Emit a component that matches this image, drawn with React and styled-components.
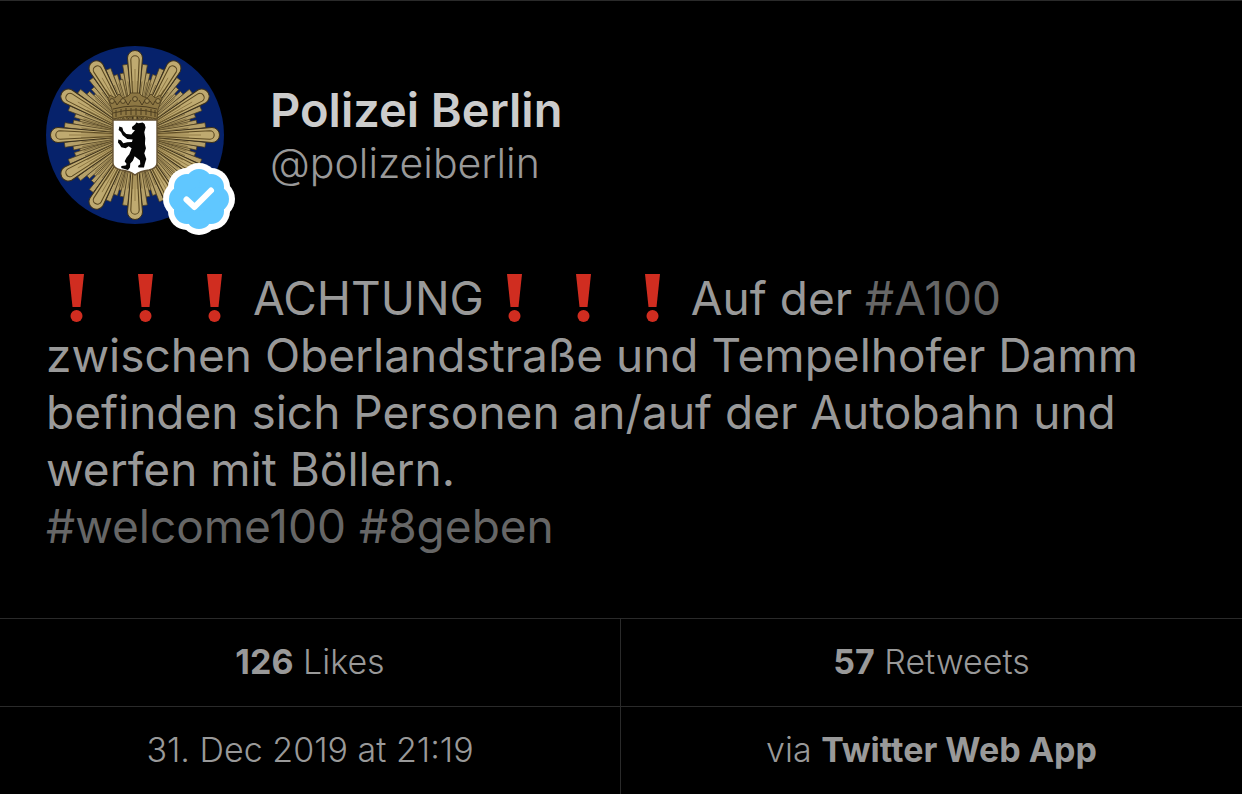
import React from "react";
import styled, { createGlobalStyle } from "styled-components";

const GlobalStyle = createGlobalStyle`
  * { box-sizing: border-box; }
  body {
    margin: 0;
    background: #000;
    color: #999;
    font-family: Inter, "Liberation Sans", sans-serif;
  }
`;

const Tweet = styled.article`
  border-top: 1px solid #2a2a2a;
`;

const Content = styled.div`
  padding: 45px 46px 63px;
`;

const Header = styled.header`
  display: flex;
  align-items: center;
  gap: 46px;
`;

const Avatar = styled.div`
  position: relative;
  flex: none;
  width: 178px;
  height: 178px;
`;

const Crest = styled.svg`
  display: block;
  width: 100%;
  height: 100%;
`;

const Badge = styled.svg`
  position: absolute;
  right: -11px;
  bottom: -11px;
  width: 72px;
  height: 72px;
`;

const Names = styled.div`
  display: flex;
  flex-direction: column;
  min-width: 0;
`;

const Name = styled.h1`
  margin: 0;
  font-size: 47px;
  line-height: 56px;
  font-weight: 600;
  color: #ccc;
`;

const Handle = styled.a`
  font-size: 41px;
  line-height: 50px;
  font-weight: 300;
  color: #999;
  text-decoration: none;
`;

const Message = styled.p`
  margin: 46px 0 0;
  font-size: 46px;
  line-height: 57px;
  font-weight: 400;
`;

const Hashtag = styled.a`
  color: #666;
  text-decoration: none;
`;

const Alert = styled.svg`
  width: 69px;
  height: 48px;
  vertical-align: -7px;
`;

const Facts = styled.footer`
  display: grid;
  grid-template-columns: 1fr 1fr;
`;

const Fact = styled.div`
  height: 88px;
  border-top: 1px solid #2a2a2a;
  border-right: ${(p) => (p.$divided ? "1px solid #2a2a2a" : "0")};
  text-align: center;
  font-size: 34px;
  line-height: 86px;
  font-weight: 300;

  strong {
    font-weight: 700;
  }
`;

const range = (n) => Array.from({ length: n }, (_, i) => i);

function Ray({ angle, length, width }) {
  const h = width / 2;
  return (
    <path
      transform={`rotate(${angle})`}
      d={`M-1 0L${-h} ${-length}H${h}L1 0Z`}
      fill="#b5a069"
      stroke="#4b3c1d"
      strokeWidth="0.7"
    />
  );
}

function PoliceStar() {
  return (
    <Crest viewBox="-89 -89 178 178" role="img" aria-label="Polizei Berlin">
      <circle r="89" fill="#06226b" />
      {range(12).map((i) => (
        <g key={i} transform={`rotate(${i * 30})`}>
          <Ray angle={15} length={57} width={5} />
          <Ray angle={-12} length={63} width={4} />
          <Ray angle={12} length={63} width={4} />
          <Ray angle={-8} length={71} width={5} />
          <Ray angle={8} length={71} width={5} />
        </g>
      ))}
      {range(12).map((i) => (
        <g key={i} transform={`rotate(${i * 30})`}>
          <path
            d="M-1 0L-7.500-77A7.500 7.500 0 0 1 7.500-77L1 0Z"
            fill="#bfaa70"
            stroke="#3b301b"
            strokeWidth="1"
          />
          <path
            d="M-1-12L-4.200-75A4.200 4.200 0 0 1 4.200-75L1-12"
            fill="none"
            stroke="#5a4820"
            strokeWidth="1.1"
          />
          <path
            d="M0-12V-66"
            fill="none"
            stroke="#8a7440"
            strokeWidth="0.8"
          />
        </g>
      ))}
      {range(72).map((i) => (
        <path
          key={i}
          transform={`rotate(${i * 5 + 2.5})`}
          d="M0-18V-54"
          stroke="#6b582d"
          strokeWidth="0.6"
        />
      ))}
      <path
        d="M-22-16L-23-26L-27-36L-25-40L-20-37L-16-41L-12-37L-7-39L-4-42H4L7-39L12-37L16-41L20-37L25-40L27-36L23-26L22-16Q0-22-22-16Z"
        fill="#8d7743"
        stroke="#5b4a26"
        strokeWidth="1"
      />
      <g fill="none" stroke="#4d3e20" strokeWidth="1">
        <path d="M-22-26Q0-32 22-26M-22-22Q0-28 22-22" />
        <path d="M-19-25V-18M-14-26V-20M-9-27V-20M-4-27V-20M1-27V-20M6-27V-20M11-26V-20M16-26V-19M20-25V-18" />
        <path d="M-20-34l2 4l3-4M-10-35l3 5l3-5M4-35l3 5l3-5M15-34l3 4l2-4" />
        {[-23, -12, 0, 12, 23].map((x) => (
          <circle key={x} cx={x} cy={x === 0 ? -36 : -34} r="2.4" fill="#a08a52" />
        ))}
      </g>
      <path
        d="M-22-15H22V28Q22 33 14 35Q5 36 0 40Q-5 36-14 35Q-22 33-22 28Z"
        fill="#fff"
        stroke="#665333"
        strokeWidth="1.4"
      />
      <path
        transform="translate(-35 -55) scale(.333)"
        d="M96 141L106 133L109 128L116 130L128 128L134 132L137 143L133 157L136 175L135 192L138 205L133 220L139 237L135 250L132 263L116 263L114 258L121 253L120 242L104 229L99 242L91 251L90 263L84 270L64 264L64 258L77 257L80 252L74 244L80 233L88 223L95 205L86 199L77 205L64 202L59 194L54 188L55 179L63 181L70 190L82 187L96 186L98 179L82 177L68 166L63 156L56 150L58 140L67 143L70 153L79 162L94 164L105 151L97 149Z"
        fill="#050505"
      />
    </Crest>
  );
}

function VerifiedBadge() {
  const lobes = (r) =>
    range(8).map((i) => (
      <circle key={i} cy="-17" r={r} transform={`rotate(${i * 45})`} />
    ));
  return (
    <Badge viewBox="-36 -36 72 72" role="img" aria-label="Verified">
      <g fill="#fff">{lobes(19)}</g>
      <g fill="#60c7ff">
        {lobes(13)}
        <circle r="12" />
      </g>
      <path
        d="M-12.500 0.500L-4.500 8L12-8.500"
        fill="none"
        stroke="#fff"
        strokeWidth="6"
        strokeLinecap="round"
        strokeLinejoin="round"
      />
    </Badge>
  );
}

function Exclamation() {
  return (
    <Alert viewBox="0 0 69 48" role="img" aria-label="❗">
      <path d="M23 0H38L34.500 33H26.500Z" fill="#d02d20" />
      <circle cx="30.500" cy="42" r="6" fill="#d02d20" />
    </Alert>
  );
}

function Alarm() {
  return range(3).map((i) => <Exclamation key={i} />);
}

export default function App() {
  return (
    <>
      <GlobalStyle />
      <Tweet>
        <Content>
          <Header>
            <Avatar>
              <PoliceStar />
              <VerifiedBadge />
            </Avatar>
            <Names>
              <Name>Polizei Berlin</Name>
              <Handle href="#polizeiberlin">@polizeiberlin</Handle>
            </Names>
          </Header>
          <Message>
            <Alarm />
            ACHTUNG
            <Alarm />
            Auf der <Hashtag href="#A100">#A100</Hashtag> zwischen
            Oberlandstraße und Tempelhofer Damm befinden sich Personen an/auf
            der Autobahn und werfen mit Böllern.
            <br />
            <Hashtag href="#welcome100">#welcome100</Hashtag>{" "}
            <Hashtag href="#8geben">#8geben</Hashtag>
          </Message>
        </Content>
        <Facts>
          <Fact $divided>
            <strong>126</strong> Likes
          </Fact>
          <Fact>
            <strong>57</strong> Retweets
          </Fact>
          <Fact $divided>
            <time dateTime="2019-12-31T21:19">31. Dec 2019 at 21:19</time>
          </Fact>
          <Fact>
            via <strong>Twitter Web App</strong>
          </Fact>
        </Facts>
      </Tweet>
    </>
  );
}
